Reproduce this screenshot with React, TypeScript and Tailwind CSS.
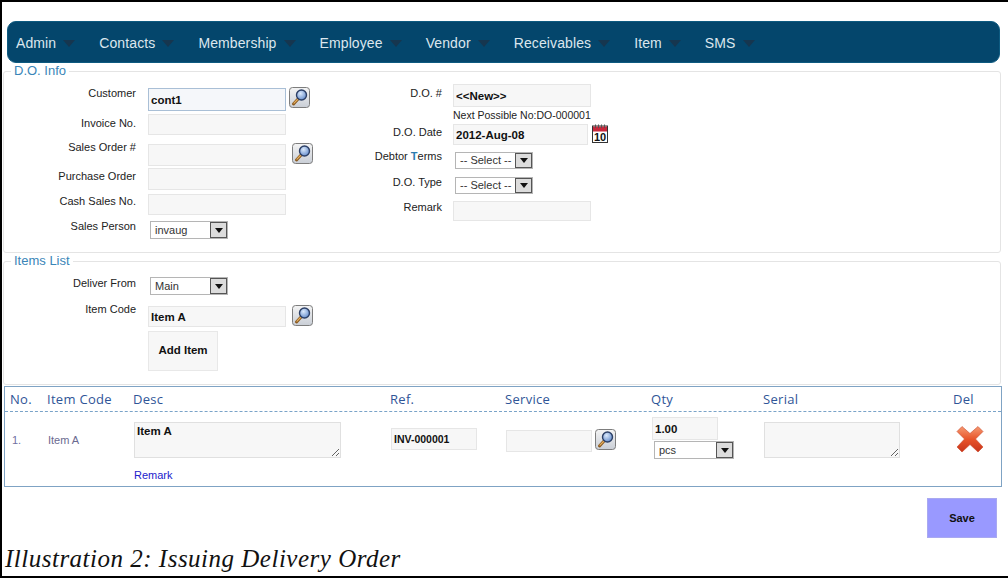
import React from 'react';

const menu = ['Admin', 'Contacts', 'Membership', 'Employee', 'Vendor', 'Receivables', 'Item', 'SMS'];

// lookup button next to the inputs
const Lookup = ({ className = '' }: { className?: string }) => (
  <svg width="21" height="21" viewBox="0 0 21 21" className={`shrink-0 ${className}`}>
    <defs>
      <linearGradient id="btnBg" x1="0" y1="0" x2="0" y2="1">
        <stop offset="0" stopColor="#f4f4f4" />
        <stop offset="1" stopColor="#c9ced6" />
      </linearGradient>
      <radialGradient id="lens" cx="0.4" cy="0.35" r="0.8">
        <stop offset="0" stopColor="#dbe9fb" />
        <stop offset="1" stopColor="#4f7cc4" />
      </radialGradient>
    </defs>
    <rect x="0.5" y="0.5" width="20" height="20" rx="3" fill="url(#btnBg)" stroke="#7d7d7d" />
    <path d="M9.5 11.5 L4.5 17" stroke="#8a5a20" strokeWidth="3" strokeLinecap="round" />
    <path d="M9 12 L5 16.2" stroke="#e6b060" strokeWidth="1.2" strokeLinecap="round" />
    <circle cx="12.5" cy="8" r="5" fill="url(#lens)" stroke="#2c3f66" strokeWidth="1.4" />
  </svg>
);

const CalendarIcon = () => (
  <svg width="16" height="19" viewBox="0 0 16 19" className="shrink-0">
    <rect x="0.5" y="2" width="15" height="16.5" fill="#fff" stroke="#333" />
    <rect x="1" y="2.5" width="14" height="5" fill="#c8283c" />
    <path d="M3.5 0.5V4M6.5 0.5V4M9.5 0.5V4M12.5 0.5V4" stroke="#555" strokeWidth="1" />
    <text x="8" y="17" textAnchor="middle" fontSize="11" fontWeight="700" fontFamily="Liberation Sans, sans-serif" fill="#111">10</text>
  </svg>
);

const DeleteIcon = () => (
  <svg width="28" height="28" viewBox="0 0 28 28">
    <defs>
      <linearGradient id="xFill" x1="0" y1="0" x2="0" y2="1">
        <stop offset="0" stopColor="#f59a72" />
        <stop offset="0.5" stopColor="#e8542a" />
        <stop offset="1" stopColor="#c8341a" />
      </linearGradient>
    </defs>
    <path
      d="M6 1.5 L14 8.5 L22 1.5 L27 6.5 L19.5 14 L27 22 L22 27 L14 19.5 L6 27 L1 22 L8.5 14 L1 6.5 Z"
      fill="url(#xFill)"
      stroke="#c9482a"
      strokeWidth="0.6"
      strokeLinejoin="round"
    />
  </svg>
);

const Select = ({ value, className = '' }: { value: string; className?: string }) => (
  <div className={`flex shrink-0 items-stretch border border-[#b5b5b5] bg-white text-[11px] leading-none text-[#333] ${className}`}>
    <span className="flex flex-1 items-center pl-[4px]">{value}</span>
    <span className="flex w-[17px] items-center justify-center border border-[#555] bg-[#dcdcdc]">
      <svg width="8" height="5" viewBox="0 0 8 5">
        <path d="M0 0H8L4 5Z" fill="#111" />
      </svg>
    </span>
  </div>
);

const Field = ({ value = '', focused, small, className = '' }: { value?: string; focused?: boolean; small?: boolean; className?: string }) => (
  <input
    readOnly
    value={value}
    className={`block shrink-0 border px-[2px] font-bold text-[#111] outline-none ${small ? 'text-[10.5px]' : 'text-[11.5px]'} ${focused ? 'border-[#a9bfd6] bg-[#f5f7fa]' : 'border-[#e6e6e6] bg-[#f7f7f7]'} ${className}`}
  />
);

const Label = ({ children, className = '' }: { children: React.ReactNode; className?: string }) => (
  <div className={`h-[14px] text-right text-[11px] leading-[14px] text-[#222] ${className}`}>{children}</div>
);

const Group = ({ title, className, children }: { title: string; className: string; children: React.ReactNode }) => (
  <fieldset className={`ml-px mr-[7px] rounded-[3px] border border-[#e4e4e4] ${className}`}>
    <legend className="ml-[7px] px-[3px] text-[13px] leading-[14px] text-[#3a85b8]">{title}</legend>
    <div className="flex">{children}</div>
  </fieldset>
);

const headers = ['No.', 'Item Code', 'Desc', 'Ref.', 'Service', 'Qty', 'Serial', 'Del'];

const App = () => {
  return (
    <div className="h-[578px] w-[1008px] overflow-hidden border-y-2 border-l-2 border-black bg-white font-['Liberation_Sans',sans-serif]">
      <nav className="ml-[5px] mr-[8px] mt-[19px] flex h-[42px] items-center rounded-[9px] border border-[#0d5a80] bg-[#04466c] pl-[8px] pt-[2px]">
        {menu.map(item => (
          <div key={item} className="mr-[24px] flex items-center gap-[7px] text-[14px] tracking-[0.11px] text-[#dce7ee]">
            <span>{item}</span>
            <svg width="12" height="7" viewBox="0 0 12 7" className="mt-[1px]">
              <path d="M0 0H12L6 7Z" fill="#16364f" />
            </svg>
          </div>
        ))}
      </nav>

      <Group title="D.O. Info" className="mt-px h-[189px]">
        <div className="w-[132px] pt-[8px]">
          <Label>Customer</Label>
          <Label className="mt-[16px]">Invoice No.</Label>
          <Label className="mt-[10px]">Sales Order #</Label>
          <Label className="mt-[15px]">Purchase Order</Label>
          <Label className="mt-[11px]">Cash Sales No.</Label>
          <Label className="mt-[11px]">Sales Person</Label>
        </div>
        <div className="ml-[12px] w-[170px] pt-[10px]">
          <div className="flex items-start gap-[3px]">
            <Field value="cont1" focused className="h-[23px] w-[138px]" />
            <Lookup className="-mt-px" />
          </div>
          <Field className="mt-[3px] h-[21px] w-[138px]" />
          <div className="mt-[9px] flex items-start gap-[6px]">
            <Field className="h-[22px] w-[138px]" />
            <Lookup className="-mt-px" />
          </div>
          <Field className="mt-[2px] h-[22px] w-[138px]" />
          <Field className="mt-[4px] h-[21px] w-[138px]" />
          <Select value="invaug" className="ml-[2px] mt-[6px] h-[18px] w-[78px]" />
        </div>
        <div className="w-[124px] pt-[8px]">
          <Label>D.O. #</Label>
          <Label className="mt-[25px]">D.O. Date</Label>
          <Label className="mt-[10px]">
            Debtor <span className="font-bold text-[#2b7cb0]">T</span>erms
          </Label>
          <Label className="mt-[12px]">D.O. Type</Label>
          <Label className="mt-[11px]">Remark</Label>
        </div>
        <div className="ml-[11px] pt-[6px]">
          <Field value="<<New>>" className="h-[23px] w-[138px]" />
          <div className="mt-[1px] h-[14px] text-[10.5px] leading-[14px] text-[#222]">Next Possible No:DO-000001</div>
          <div className="mt-[2px] flex items-start gap-[4px]">
            <Field value="2012-Aug-08" className="h-[21px] w-[135px]" />
            <CalendarIcon />
          </div>
          <Select value="-- Select --" className="ml-[2px] mt-[7px] h-[17px] w-[78px]" />
          <Select value="-- Select --" className="ml-[2px] mt-[8px] h-[17px] w-[78px]" />
          <Field className="mt-[7px] h-[20px] w-[138px]" />
        </div>
      </Group>

      <Group title="Items List" className="mt-[1px] h-[131px]">
        <div className="w-[132px] pt-[8px]">
          <Label>Deliver From</Label>
          <Label className="mt-[12px]">Item Code</Label>
        </div>
        <div className="ml-[12px] pt-[9px]">
          <Select value="Main" className="ml-[2px] h-[18px] w-[78px]" />
          <div className="mt-[11px] flex items-start gap-[6px]">
            <Field value="Item A" className="h-[21px] w-[138px]" />
            <Lookup className="-mt-[1px]" />
          </div>
          <button className="mt-[4px] block h-[40px] w-[70px] border border-[#e8e8e8] bg-[#f7f7f7] text-[11.5px] font-bold text-[#111]">
            Add Item
          </button>
        </div>
      </Group>

      <section className="ml-[2px] mr-[6px] mt-px h-[101px] border border-[#7fa3c4]">
        <div className="grid h-[25px] grid-cols-[37px_86px_257px_115px_146px_112px_190px_1fr] items-center border-b border-dashed border-[#7aa3c8] pl-[5px] pt-px font-['Open_Sans',sans-serif] text-[13px] tracking-[0.3px] text-[#2f5597]">
          {headers.map(h => (
            <div key={h}>{h}</div>
          ))}
        </div>
        <div className="grid grid-cols-[37px_86px_257px_115px_146px_112px_190px_1fr] pl-[5px]">
          <div className="pl-[2px] pt-[21px] text-[11px] leading-[14px] text-[#7070a0]">1.</div>
          <div className="pl-px pt-[21px] text-[11px] leading-[14px] text-[#6a6a90]">Item A</div>
          <div className="pl-px pt-[10px]">
            <textarea
              readOnly
              value="Item A"
              className="block h-[36px] w-[207px] border border-[#e0e0e0] bg-[#f7f7f7] px-[2px] pt-[2px] text-[11.5px] font-bold leading-[13px] text-[#111] outline-none"
            />
            <div className="mt-[10px] text-[11px] leading-[14px] text-[#2222cc]">Remark</div>
          </div>
          <div className="pl-px pt-[16px]">
            <Field value="INV-000001" small className="h-[22px] w-[86px]" />
          </div>
          <div className="flex items-start gap-[3px] pl-px pt-[18px]">
            <Field className="h-[22px] w-[86px]" />
            <Lookup className="-mt-px" />
          </div>
          <div className="pl-px pt-[5px]">
            <Field value="1.00" className="h-[23px] w-[66px]" />
            <Select value="pcs" className="ml-[2px] mt-px h-[18px] w-[80px]" />
          </div>
          <div className="pl-px pt-[10px]">
            <textarea readOnly className="block h-[36px] w-[136px] border border-[#e0e0e0] bg-[#f7f7f7] outline-none" />
          </div>
          <div className="pl-[3px] pt-[13px]">
            <DeleteIcon />
          </div>
        </div>
      </section>

      <div className="mr-[11px] mt-[11px] flex justify-end">
        <button className="h-[40px] w-[70px] border border-[#a9a9f0] bg-[#9999ff] text-[11px] font-bold text-[#111]">Save</button>
      </div>
      <div className="ml-[3px] mt-[6px] font-['Liberation_Serif',serif] text-[25px] italic leading-[30px] tracking-[0.5px] text-[#111]">
        Illustration 2: Issuing Delivery Order
      </div>
    </div>
  );
};

export default App;
